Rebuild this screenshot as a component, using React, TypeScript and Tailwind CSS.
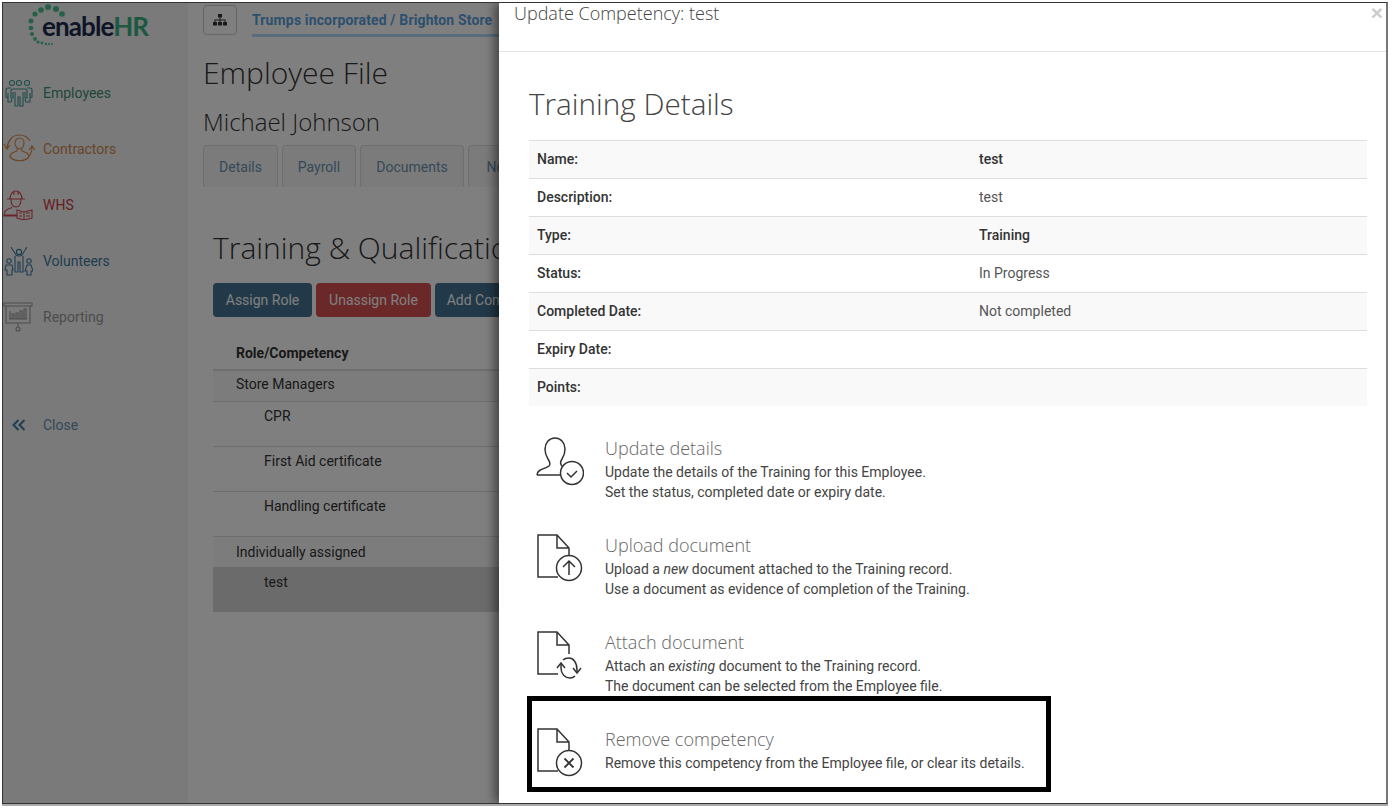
import type { ReactNode } from "react";

const heading = "font-['Open_Sans',sans-serif] font-light";

function PeopleIcon() {
  return (
    <svg width="30" height="30" viewBox="0 0 30 30" fill="none" stroke="#3f9a94" strokeWidth="1.1">
      <circle cx="9" cy="5" r="2.5" />
      <circle cx="16" cy="5" r="2.5" />
      <circle cx="24" cy="5" r="2.500" />
      <path d="M10 11h12c1 0 2 1 2 2v7h-2v-6M10 11c-1 0-2 1-2 2v7h2v-6M12 14v14h3v-9h2v9h3V14" />
      <path d="M8 10H5c-1 0-2 1-2 2v7l2 1v-5M5 20v4h3l1-3M24 10h3c1 0 2 1 2 2v7l-2 1v-5M27 20v4h-4l-1-3" />
    </svg>
  );
}

function ContractorIcon() {
  return (
    <svg width="32" height="30" viewBox="0 0 32 30" fill="none" stroke="#d98a4a" strokeWidth="1.1">
      <path d="M12 9c0-3 2-5 4.500-5S21 6 21 9c0 3-2 6-4.500 6S12 12 12 9Z" />
      <path d="M14 15v2l-5 2c-1 1-2 3-2 4 5 5 14 5 19 0 0-1-1-3-2-4l-5-2v-2" />
      <path d="M4 14C5 6 10 1 16 1c5 0 9 2 11 6M1 10l3 5 3-4M29 13c0 4-1 7-3 9M26 16l3-4 3 4" />
    </svg>
  );
}

function WhsIcon() {
  return (
    <svg width="30" height="30" viewBox="0 0 30 30" fill="none" stroke="#d6484d" strokeWidth="1.1">
      <path d="M7 9c0-5 3-8 6-8s6 3 6 8M4 9h18M11 1v4M15 1v4M8 9c0 5 2 8 5 8s5-3 5-8" />
      <path d="M1 25c0-4 3-6 7-7l1-1M1 25h13M1 25v1h13" />
      <path d="M14 20l7 2 8-2v8l-8 2-7-2ZM21 22v8M16 23h3M16 26h3M23 23h4M23 26h4" />
    </svg>
  );
}

function VolunteerIcon() {
  return (
    <svg width="30" height="30" viewBox="0 0 30 30" fill="none" stroke="#3f7ba3" strokeWidth="1.1">
      <circle cx="16" cy="6" r="2.600" />
      <path d="M8 1l5 8c0 0 1 1 3 1s3-1 3-1l5-8M12 10v16h3V16h2v10h3V10" />
      <circle cx="6" cy="15" r="2.200" />
      <path d="M3 19h6l1 5H9v5H4v-5H2Z" />
      <circle cx="26" cy="15" r="2.200" />
      <path d="M24 19h4l2 6h-2v4h-4v-4h-2Z" />
    </svg>
  );
}

function ReportIcon() {
  return (
    <svg width="30" height="30" viewBox="0 0 30 30" fill="none" stroke="#9a9a9a" strokeWidth="1.1">
      <path d="M1 1h28v3H1ZM3 4v17h24V4M15 21v4" />
      <circle cx="15" cy="27" r="2" />
      <path d="M7 17V9M9 17v-5h2v5M13 17v-6h2v6M17 17V9h2v8M21 17V7h2v10M6 17h18" />
    </svg>
  );
}

function Logo() {
  const dots = [
    [38, 7, 2.8], [45, 4, 3], [53, 6, 3], [59, 11, 2.8],
    [32, 11, 2.6], [28, 18, 2.5], [28, 25, 2.3], [29, 31, 2.1], [32, 36, 1.9],
    [35, 39, 1.6], [39, 40, 1.4], [43, 41, 1.2], [46, 41, 1.1], [49, 41, 1],
  ];
  return (
    <div className="relative h-[50px] w-[185px] shrink-0">
      <svg width="70" height="48" viewBox="0 0 70 48" className="absolute left-0 top-0" fill="#4bc08f">
        {dots.map(([x, y, r]) => (
          <circle key={`${x}-${y}`} cx={x} cy={y} r={r} />
        ))}
      </svg>
      <div className="absolute left-[39px] top-[6px] font-['Lato',sans-serif] text-[26px] leading-[34px] font-bold tracking-[-0.9px] text-[#1c2a4f]">
        enable<span className="text-[#38b084]">HR</span>
      </div>
    </div>
  );
}

function SideItem({ icon, label, color }: { icon: ReactNode; label: string; color: string }) {
  return (
    <div className="flex h-[56px] items-center">
      <div className="w-[40px] shrink-0 pb-[1px]">{icon}</div>
      <span className={`text-sm ${color}`}>{label}</span>
    </div>
  );
}

function Tab({ label, width }: { label: string; width: string }) {
  return (
    <div className={`flex h-[42px] items-center justify-center rounded-t border border-b-0 border-[#ddd] bg-[#f7f7f7] text-sm text-[#6a93b2] ${width}`}>
      {label}
    </div>
  );
}

function Row({ name, value, bold, striped }: { name: string; value?: string; bold?: boolean; striped?: boolean }) {
  return (
    <div className={`flex h-[38px] items-center border-t border-[#ddd] px-2 pb-[2px] text-sm text-[#333] ${striped ? "bg-[#f9f9f9]" : ""}`}>
      <span className="w-[442px] shrink-0 font-medium">{name}</span>
      <span className={bold ? "font-medium" : "text-[#555]"}>{value}</span>
    </div>
  );
}

function DocIcon({ children }: { children: ReactNode }) {
  return (
    <svg width="50" height="50" viewBox="0 0 50 50" fill="none" stroke="#333" strokeWidth="1.5">
      <path d="M24 44H4V2h19l12 13v9M23 2v13h12" />
      {children}
    </svg>
  );
}

function UserCheckIcon() {
  return (
    <svg width="50" height="50" viewBox="0 0 50 50" fill="none" stroke="#333" strokeWidth="1.5">
      <path d="M3 39c0-6 8-6 12-9 2-2 1-4-1-7-2-3-3-6-3-10 0-6 4-11 10-11s10 5 10 11c0 4-1 7-3 10-2 3-2 5 0 7 1 1 2 1 3 2M3 39h24" />
      <circle cx="38" cy="37" r="11.500" fill="#fff" />
      <path d="M33 37l4 4 6-6" />
    </svg>
  );
}

function Action({ icon, title, children }: { icon: ReactNode; title: string; children: ReactNode }) {
  return (
    <div className="flex">
      <div className="w-[76px] shrink-0 pl-[5px]">{icon}</div>
      <div>
        <div className="font-['Open_Sans',sans-serif] text-lg leading-[24px] font-light text-[#666]">{title}</div>
        <div className="mt-[2px] text-sm leading-[20px] text-[#444]">{children}</div>
      </div>
    </div>
  );
}

export default function App() {
  return (
    <div className="relative h-[808px] w-[1392px] overflow-hidden bg-white p-[2px] font-['Roboto',sans-serif]">
      <div className="relative flex h-[802px] w-[1386px] overflow-hidden border border-r-2 border-[#333] border-r-[#777] bg-white shadow-[0_2px_0_#aaa]">
        {/* page under the modal */}
        <aside className="w-[185px] shrink-0 bg-[#f5f5f5]">
          <Logo />
          <div className="mt-[12px]">
            <SideItem icon={<PeopleIcon />} label="Employees" color="text-[#3f8f78]" />
            <SideItem icon={<ContractorIcon />} label="Contractors" color="text-[#d08a50]" />
            <SideItem icon={<WhsIcon />} label="WHS" color="text-[#cc3a40]" />
            <SideItem icon={<VolunteerIcon />} label="Volunteers" color="text-[#3f7ba3]" />
            <SideItem icon={<ReportIcon />} label="Reporting" color="text-[#999]" />
          </div>
          <div className="mt-[70px] flex items-center">
            <div className="w-[40px] pl-[9px] text-[#3f7ba3]">
              <svg width="14" height="14" viewBox="0 0 14 14" fill="none" stroke="currentColor" strokeWidth="2">
                <path d="M6.500 2L1.500 7l5 5M12.500 2L7.500 7l5 5" />
              </svg>
            </div>
            <span className="text-sm text-[#6b90b0]">Close</span>
          </div>
        </aside>

        <main className="min-w-0 flex-1 bg-white pl-[15px]">
          <div className="flex h-[36px] items-start pt-[2px]">
            <div className="flex h-[30px] w-[34px] items-center justify-center rounded border border-[#ccc]">
              <svg width="14" height="12" viewBox="0 0 14 12" fill="#333">
                <rect x="5" y="0" width="4" height="3.5" />
                <rect x="0" y="8" width="4" height="3.5" />
                <rect x="5" y="8" width="4" height="3.5" />
                <rect x="10" y="8" width="4" height="3.5" />
                <path d="M6.500 3.500h1V5.500h5V8h-1V6.500h-4V8h-1V6.500h-4V8h-1V5.500h5Z" />
              </svg>
            </div>
            <div className="ml-[15px] h-[32px] w-[400px] border-b-[3px] border-[#b0d8f5] text-sm leading-[30px] font-bold tracking-[0.14px] whitespace-nowrap text-[#5a9fdc]">
              Trumps incorporated / Brighton Store
            </div>
          </div>
          <h1 className={`${heading} mt-[14px] text-[30px] leading-[40px] text-[#333]`}>Employee File</h1>
          <h2 className={`${heading} mt-[12px] text-[24px] leading-[34px] text-[#333]`}>Michael Johnson</h2>
          <div className="mt-[6px] flex gap-[4px]">
            <Tab label="Details" width="w-[75px]" />
            <Tab label="Payroll" width="w-[74px]" />
            <Tab label="Documents" width="w-[104px]" />
            <Tab label="Notes" width="w-[74px]" />
          </div>
          <div className="pl-[10px]">
            <h2 className={`${heading} mt-[41px] text-[30px] leading-[40px] whitespace-nowrap text-[#333]`}>
              Training &amp; Qualifications
            </h2>
            <div className="mt-[15px] flex gap-[4px] text-sm text-white">
              <div className="flex h-[34px] w-[99px] items-center justify-center rounded bg-[#447392]">Assign Role</div>
              <div className="flex h-[34px] w-[115px] items-center justify-center rounded bg-[#d45050]">Unassign Role</div>
              <div className="flex h-[34px] w-[130px] items-center justify-center rounded bg-[#447392]">Add Competency</div>
            </div>
            <div className="mt-[19px] w-[600px] text-sm text-[#333]">
              <div className="flex h-[35px] items-center border-b-2 border-[#ddd] pl-[23px] font-bold">Role/Competency</div>
              <div className="flex h-[31px] items-center border-b border-[#ddd] bg-[#f9f9f9] pb-[5px] pl-[23px]">Store Managers</div>
              <div className="h-[45px] border-b border-[#ddd] pl-[51px] pt-[4px]">CPR</div>
              <div className="h-[45px] border-b border-[#ddd] pl-[51px] pt-[4px]">First Aid certificate</div>
              <div className="h-[45px] border-b border-[#ddd] pl-[51px] pt-[4px]">Handling certificate</div>
              <div className="flex h-[30px] items-center bg-[#f9f9f9] pb-[1px] pl-[23px]">Individually assigned</div>
              <div className="h-[45px] bg-[#d6d6d6] pl-[51px] pt-[5px]">test</div>
            </div>
          </div>
        </main>

        {/* dim layer */}
        <div className="absolute inset-0 bg-black/50" />

        {/* modal */}
        <section className="absolute inset-y-0 right-0 w-[887px] bg-white shadow-[-4px_0_10px_rgba(0,0,0,0.5)]">
          <div className="relative h-[49px] border-b border-[#e5e5e5] pl-[15px] font-['Open_Sans',sans-serif] text-lg leading-[20px] font-light text-[#444]">
            Update Competency: test
            <span className="absolute right-[3px] top-[2px] font-['Liberation_Sans',sans-serif] text-[21px] leading-[15px] font-bold text-[#ccc]">×</span>
          </div>
          <div className="pl-[30px] pr-[19px]">
            <h2 className={`${heading} mt-[31px] text-[29.7px] leading-[42px] text-[#444]`}>Training Details</h2>
            <div className="mt-[15px]">
              <Row name="Name:" value="test" bold striped />
              <Row name="Description:" value="test" />
              <Row name="Type:" value="Training" bold striped />
              <Row name="Status:" value="In Progress" />
              <Row name="Completed Date:" value="Not completed" striped />
              <Row name="Expiry Date:" />
              <Row name="Points:" striped />
            </div>
            <div className="mt-[30px] flex flex-col gap-[31px]">
              <Action icon={<UserCheckIcon />} title="Update details">
                Update the details of the Training for this Employee.
                <br />
                Set the status, completed date or expiry date.
              </Action>
              <Action
                icon={
                  <DocIcon>
                    <circle cx="35" cy="35" r="12.500" fill="#fff" />
                    <path d="M35 42V28M29 34l6-6 6 6" />
                  </DocIcon>
                }
                title="Upload document"
              >
                Upload a <em>new</em> document attached to the Training record.
                <br />
                Use a document as evidence of completion of the Training.
              </Action>
              <Action
                icon={
                  <DocIcon>
                    <path d="M27 35c0 8 4 13 9 13 2 0 4-1 5-2M29 30c2-2 4-2 6-2 4 0 8 4 8 14" fill="#fff" stroke="none" />
                    <path d="M27 34v4c0 6 4 10 9 10 2 0 4-1 5-2M29 30c2-2 4-2 6-2 4 0 8 4 8 12v3" />
                    <path d="M23 38l4-5 4 5M39 38l4 5 4-5" />
                  </DocIcon>
                }
                title="Attach document"
              >
                Attach an <em>existing</em> document to the Training record.
                <br />
                The document can be selected from the Employee file.
              </Action>
              <Action
                icon={
                  <DocIcon>
                    <circle cx="35" cy="36" r="12.500" fill="#fff" />
                    <path d="M30.500 31.500l9 9M39.500 31.500l-9 9" strokeWidth="1.800" />
                  </DocIcon>
                }
                title="Remove competency"
              >
                Remove this competency from the Employee file, or clear its details.
              </Action>
            </div>
          </div>
          {/* callout drawn on top of the screenshot */}
          <div className="absolute left-[28px] top-[693px] h-[96px] w-[524px] border-[5px] border-black" />
        </section>
      </div>
    </div>
  );
}
